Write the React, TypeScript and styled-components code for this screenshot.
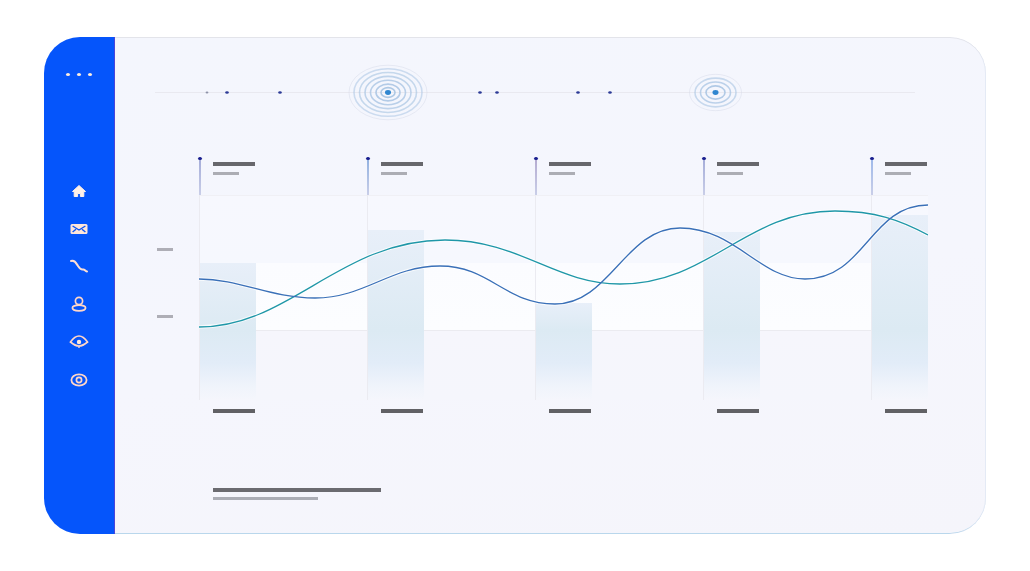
import styled, { createGlobalStyle } from 'styled-components';

const bluePath =
    'M199 279 C240 279 270 298 315 298 C365 298 390 266 440 266 C490 266 505 304 555 304 C610 304 625 228 680 228 C735 228 760 279 805 279 C865 279 870 205 928 205';
const tealPath =
    'M199 327 C290 327 340 240 445 240 C520 240 555 284 620 284 C710 284 745 211 835 211 C875 211 900 220 928 235';

const columns = [
    { bandTop: 68, stem: '#a3abd8' },
    { bandTop: 35, stem: '#8fb0e0' },
    { bandTop: 108, stem: '#b3a9cf' },
    { bandTop: 37, stem: '#a3abd8' },
    { bandTop: 20, stem: '#9db8ea' }
];

const Ripple = ({ cx, rings }: { cx: number; rings: number[] }): JSX.Element => (
    <g fill="none">
        {rings.map((r, i) => (
            <ellipse
                key={r}
                cx={cx}
                cy={92.5}
                rx={r}
                ry={r * 0.7}
                stroke={i === 0 ? '#d3d8e6' : '#a6c3e2'}
                strokeWidth={i === 0 ? 1 : 1.6}
                opacity={0.45 + (i / rings.length) * 0.55}
            />
        ))}
        <ellipse cx={cx} cy={92.5} rx={3} ry={2.4} fill="#2f86d0" />
    </g>
);

const App = (): JSX.Element => {
    return (
        <Page>
            <GlobalStyle />
            <Card>
                <Sidebar>
                    <Dots>
                        <Dot />
                        <Dot />
                        <Dot />
                    </Dots>
                    <NavIcons>
                        <NavIcon viewBox="0 0 20 20">
                            <path
                                d="M10 4.5 L3.5 10.5 L5.2 10.5 L5.2 15.5 L8.6 15.5 L8.6 12.5 L11.4 12.5 L11.4 15.5 L14.8 15.5 L14.8 10.5 L16.5 10.5 Z"
                                fill="#fff1e8"
                                stroke="#fff1e8"
                                strokeLinejoin="round"
                            />
                        </NavIcon>
                        <NavIcon viewBox="0 0 20 20">
                            <rect x="1.5" y="5" width="17" height="10" rx="1.5" fill="#ffe6da" />
                            <path d="M3.6 7 L10 11 L16.4 7" fill="none" stroke="#0a55f5" strokeWidth="1.4" />
                            <path d="M3.6 13 L7 10.2 M16.4 13 L13 10.2" fill="none" stroke="#0a55f5" strokeWidth="1.4" />
                        </NavIcon>
                        <NavIcon viewBox="0 0 20 20">
                            <path
                                d="M2 4 C6 3 7 6 9 9 C11 12 12 13 14 12.5 C15.5 12 16 14 18 14.5"
                                fill="none"
                                stroke="#ffe0d4"
                                strokeWidth="2"
                                strokeLinecap="round"
                            />
                        </NavIcon>
                        <NavIcon viewBox="0 0 20 20">
                            <circle cx="10" cy="7" r="3.6" fill="none" stroke="#ffd6c8" strokeWidth="1.7" />
                            <ellipse cx="10" cy="14" rx="6.6" ry="2.8" fill="none" stroke="#ffd6c8" strokeWidth="1.7" />
                        </NavIcon>
                        <NavIcon viewBox="0 0 20 20">
                            <path
                                d="M1.5 10 C5 5 8 4 10 4 C12 4 15 5 18.5 10 C15 13 12.5 14 10 14 C7.5 14 5 13 1.5 10 Z"
                                fill="none"
                                stroke="#ffd6c8"
                                strokeWidth="1.7"
                            />
                            <circle cx="10" cy="10" r="2.2" fill="#ffe8dc" />
                            <path d="M10 14 L10 16" stroke="#ffd6c8" strokeWidth="1.4" />
                        </NavIcon>
                        <NavIcon viewBox="0 0 20 20">
                            <ellipse cx="10" cy="10" rx="7.6" ry="5.6" fill="none" stroke="#ffd6c8" strokeWidth="1.8" />
                            <circle cx="10" cy="10" r="2.6" fill="none" stroke="#ffd6c8" strokeWidth="1.7" />
                        </NavIcon>
                    </NavIcons>
                </Sidebar>
                <Main>
                    <Timeline viewBox="115 55 871 75">
                        <line x1="155" y1="92.5" x2="915" y2="92.5" stroke="#e9e9f0" strokeWidth="1" />
                        <ellipse cx="207" cy="92.5" rx="1.4" ry="0.9" fill="#8e93a8" />
                        {[227, 280, 480, 497, 578, 610].map((x) => (
                            <ellipse key={x} cx={x} cy="92.5" rx="1.8" ry="1.2" fill="#2c3a96" />
                        ))}
                        <Ripple cx={388} rings={[39, 34, 28.5, 23, 17.5, 12, 7]} />
                        <Ripple cx={715.5} rings={[26, 20.5, 15, 9.5]} />
                    </Timeline>
                    <ChartGrid>
                        <Spacer />
                        {columns.map((c) => (
                            <Head key={c.bandTop}>
                                <Stem $color={c.stem} />
                                <div>
                                    <TitleBar />
                                    <SubBar />
                                </div>
                            </Head>
                        ))}
                        <Axis>
                            <AxisTick />
                            <AxisTick />
                        </Axis>
                        <Plot>
                            {columns.map((c) => (
                                <PlotColumn key={c.bandTop}>
                                    <Band $top={c.bandTop} />
                                </PlotColumn>
                            ))}
                            <Curves viewBox="199 195 729 205">
                                <path d={tealPath} fill="none" stroke="#fff" strokeWidth="3.5" opacity="0.7" />
                                <path d={bluePath} fill="none" stroke="#fff" strokeWidth="3.5" opacity="0.7" />
                                <path d={tealPath} fill="none" stroke="#1f97a8" strokeWidth="1.3" />
                                <path d={bluePath} fill="none" stroke="#3a70b8" strokeWidth="1.3" />
                            </Curves>
                        </Plot>
                        <Spacer />
                        {columns.map((c) => (
                            <Foot key={c.bandTop}>
                                <FootBar />
                            </Foot>
                        ))}
                    </ChartGrid>
                    <Legend>
                        <LegendTitle />
                        <LegendSub />
                    </Legend>
                </Main>
            </Card>
        </Page>
    );
};

export default App;

const GlobalStyle = createGlobalStyle`
    html, body {
        margin: 0;
        background: #fff;
        overflow: hidden;
    }
`;

const Page = styled.div`
    box-sizing: border-box;
    width: 1030px;
    height: 571px;
    padding: 37px 44px;
    background: #fff;
`;

const Card = styled.div`
    display: flex;
    width: 942px;
    height: 497px;
    border-radius: 36px;
    overflow: hidden;
    background: #f5f6fc;
`;

const Sidebar = styled.div`
    box-sizing: border-box;
    flex: 0 0 71px;
    display: flex;
    flex-direction: column;
    align-items: center;
    padding-top: 36px;
    background: #0555fb;
    border-right: 1px solid #4a45d8;
`;

const Dots = styled.div`
    display: flex;
    gap: 7px;
`;

const Dot = styled.span`
    width: 4px;
    height: 3px;
    border-radius: 50%;
    background: #ffeedd;
`;

const NavIcons = styled.div`
    display: flex;
    flex-direction: column;
    gap: 17.8px;
    margin-top: 105px;
`;

const NavIcon = styled.svg`
    display: block;
    width: 20px;
    height: 20px;
`;

const Main = styled.div`
    flex: 1;
    display: flex;
    flex-direction: column;
    padding-top: 18px;
    border-radius: 0 36px 36px 0;
    background: linear-gradient(170deg, #f4f6fd 0%, #f5f6fd 55%, #f5f5fb 100%);
    box-shadow: inset 0 1px 0 #e3e4ea, inset -1px 0 0 #e4eaf5, inset 0 -1px 0 #b9d7ec;
`;

const Timeline = styled.svg`
    display: block;
    flex: none;
    width: 871px;
    height: 75px;
`;

const ChartGrid = styled.div`
    display: grid;
    grid-template-columns: 42px repeat(4, 168px) 57px;
    grid-template-rows: 38px 205px auto;
    margin: 27px 0 0 42px;
`;

const Spacer = styled.div``;

const Head = styled.div`
    display: flex;
    gap: 12px;
`;

const Stem = styled.div<{ $color: string }>`
    position: relative;
    flex: none;
    width: 2px;
    height: 38px;
    background: linear-gradient(to bottom, ${(p) => p.$color}, #c9cee8);

    &::before {
        content: '';
        position: absolute;
        top: 0;
        left: -1px;
        width: 4px;
        height: 3px;
        border-radius: 50%;
        background: #1a1f8f;
    }
`;

const TitleBar = styled.div`
    width: 42px;
    height: 4px;
    margin-top: 5px;
    background: #67676c;
`;

const SubBar = styled.div`
    width: 26px;
    height: 3px;
    margin-top: 6px;
    background: #acadb4;
`;

const Axis = styled.div`
    display: flex;
    flex-direction: column;
    gap: 64px;
    padding-top: 53px;
`;

const AxisTick = styled.div`
    width: 16px;
    height: 3px;
    background: #aeaeb6;
`;

const Plot = styled.div`
    grid-column: 2 / 7;
    position: relative;
    display: grid;
    grid-template-columns: repeat(4, 168px) 57px;
    background: linear-gradient(
        to bottom,
        #f7f8fe 0,
        #f6f8fe 68px,
        #fbfcff 68px,
        #fcfdff 135px,
        #ebebf0 135px,
        #ebebf0 136px,
        #f6f6fc 136px,
        #f5f6fc 205px
    );
    box-shadow: inset 0 1px 0 #f0f0f5;
`;

const PlotColumn = styled.div`
    border-left: 1px solid #ebebf1;
`;

const Band = styled.div<{ $top: number }>`
    width: 56px;
    height: ${(p) => 205 - p.$top}px;
    margin-top: ${(p) => p.$top}px;
    background: linear-gradient(
        to bottom,
        #e8eff9 0,
        #dceaf3 ${(p) => 135 - p.$top}px,
        #e2ecf8 ${(p) => 168 - p.$top}px,
        #f0f4fb ${(p) => 192 - p.$top}px,
        rgba(245, 246, 252, 0) 100%
    );
`;

const Curves = styled.svg`
    position: absolute;
    top: 0;
    left: 0;
    width: 729px;
    height: 205px;
`;

const Foot = styled.div`
    padding: 9px 0 0 14px;
`;

const FootBar = styled.div`
    width: 42px;
    height: 4px;
    background: #616165;
`;

const Legend = styled.div`
    display: flex;
    flex-direction: column;
    gap: 5px;
    margin: 75px 0 0 98px;
`;

const LegendTitle = styled.div`
    width: 168px;
    height: 4px;
    background: #6b6b70;
`;

const LegendSub = styled.div`
    width: 105px;
    height: 3px;
    background: #abadb5;
`;
